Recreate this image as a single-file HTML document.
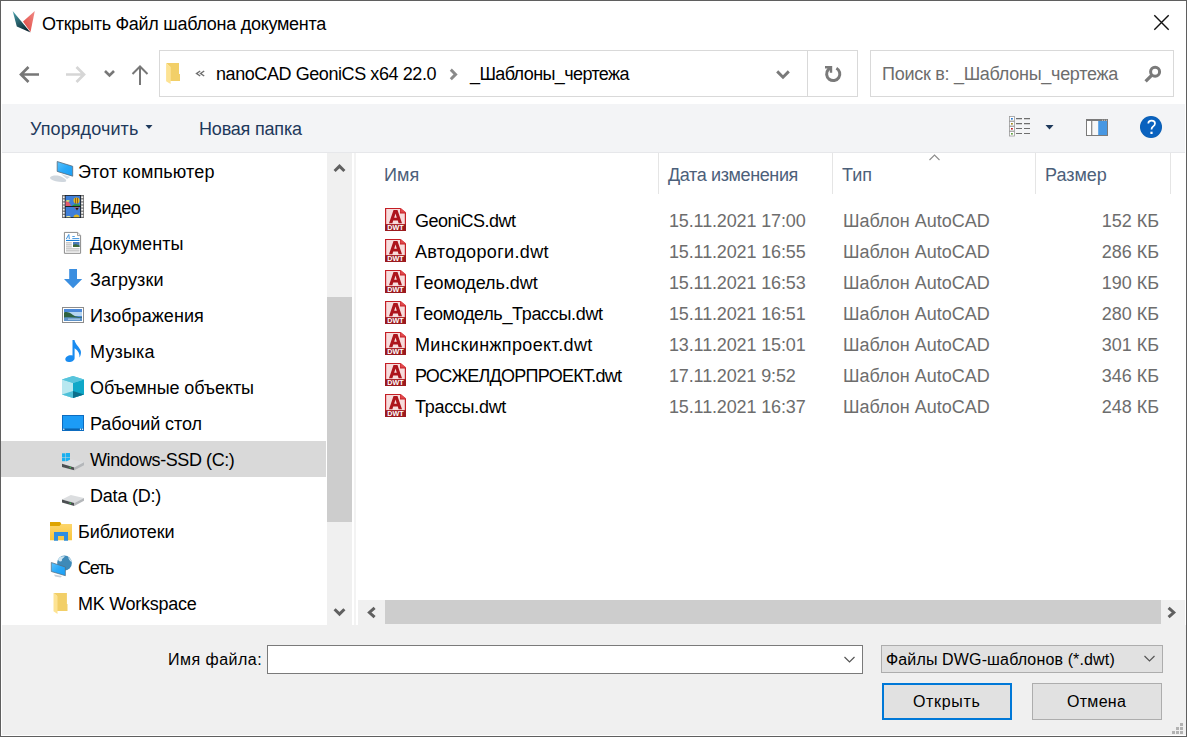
<!DOCTYPE html>
<html><head><meta charset="utf-8">
<style>
*{margin:0;padding:0;box-sizing:border-box}
html,body{width:1187px;height:737px;overflow:hidden;background:#fff}
body{position:relative;font-family:"Liberation Sans",sans-serif;font-size:18px;color:#000}
.a{position:absolute}
.t{position:absolute;white-space:nowrap;line-height:18px;font-size:18px}
.s{position:absolute;white-space:nowrap;line-height:16px;font-size:16px}
svg{position:absolute;overflow:visible}
</style></head><body>
<!-- window border -->
<div class="a" style="left:0;top:0;width:1187px;height:737px;border:1px solid #5f5f5f;border-bottom-color:#5f5f5f"></div>

<!-- title bar -->
<svg style="left:0;top:0" width="40" height="40">
  <defs>
    <linearGradient id="tg" x1="0" y1="0" x2="0.6" y2="1"><stop offset="0" stop-color="#4aa3ae"/><stop offset="1" stop-color="#0a2630"/></linearGradient>
    <linearGradient id="rg" x1="1" y1="0" x2="0" y2="1"><stop offset="0" stop-color="#f08a86"/><stop offset="1" stop-color="#e0443c"/></linearGradient>
  </defs>
  <polygon points="12.7,11 30.5,32.6 16.8,26.6" fill="url(#tg)"/>
  <polygon points="34.8,11 23,21.5 30.5,32" fill="url(#rg)"/>
</svg>
<div class="t" style="left:42px;top:15px;letter-spacing:-0.28px;">Открыть Файл шаблона документа</div>
<svg style="left:0;top:0" width="1187" height="40"><path d="M1154.3 15.3 L1168.7 29.7 M1168.7 15.3 L1154.3 29.7" stroke="#111" stroke-width="1.4"/></svg>

<!-- nav -->
<svg style="left:0;top:0" width="160" height="100">
  <path d="M21 74.5 H39 M28.5 67 L21 74.5 L28.5 82" fill="none" stroke="#777" stroke-width="2.7"/>
  <path d="M84 74.5 H66 M76.5 67 L84 74.5 L76.5 82" fill="none" stroke="#d6d6d6" stroke-width="2.7"/>
  <path d="M105 71 L109.5 75.5 L114 71" fill="none" stroke="#777" stroke-width="2.6"/>
  <path d="M140 85 V66.5 M132.5 74 L140 66.5 L147.5 74" fill="none" stroke="#777" stroke-width="2"/>
</svg>

<!-- address bar -->
<div class="a" style="left:159px;top:50px;width:699px;height:47px;border:1px solid #d9d9d9;background:#fff"></div>
<div class="a" style="left:807px;top:51px;width:1px;height:45px;background:#d9d9d9"></div>
<svg style="left:0;top:0" width="1187" height="100">
  <!-- folder -->
  <path d="M166.1 63.1 H179 V74 H180 V81 H170.2 V67 Z" fill="#f2cf68"/>
  <path d="M166.1 63.1 L170.6 67 V84 L166.1 81.3 Z" fill="#fde393"/>
  <path d="M200.2 71 L196.6 73.5 L200.2 76 M204.2 71 L200.6 73.5 L204.2 76" fill="none" stroke="#707070" stroke-width="1.5"/>
  <path d="M450.8 69.6 L455.6 74.4 L450.8 79.2" fill="none" stroke="#8a8a8a" stroke-width="2.9"/>
  <path d="M777.2 71.4 L783 77.2 L788.8 71.4" fill="none" stroke="#7a7a7a" stroke-width="2.9"/>
  <!-- refresh -->
  <path d="M836.4 68.2 A6.6 6.6 0 1 1 828.3 69.6 L830.5 67.4" fill="none" stroke="#7a7a7a" stroke-width="3"/>
  <path d="M825 66 H832.2 V72.7 H829.8 V68.4 H825 Z" fill="#7a7a7a"/>
  
  <!-- search -->

</svg>
<div class="t" style="left:216px;top:65px;letter-spacing:-0.42px;">nanoCAD GeoniCS x64 22.0</div>
<div class="t" style="left:470px;top:65px;letter-spacing:-0.6px;">_Шаблоны_чертежа</div>
<div class="a" style="left:870px;top:50px;width:304px;height:47px;border:1px solid #d9d9d9;background:#fff"></div>
<div class="t" style="left:882px;top:65px;color:#6d6d6d;letter-spacing:-0.28px;">Поиск в: _Шаблоны_чертежа</div>
<svg style="left:0;top:0" width="1187" height="100"><circle cx="1155.1" cy="71.8" r="4.5" fill="none" stroke="#7a7a7a" stroke-width="3"/><path d="M1151.6 75.4 L1145.6 81.4" stroke="#7a7a7a" stroke-width="3.2"/></svg>

<!-- toolbar -->
<div class="a" style="left:2px;top:104px;width:1183px;height:49px;background:#f3f4f6;border-bottom:1px solid #e6e7ea"></div>
<div class="t" style="left:30px;top:120px;color:#1e395b;letter-spacing:0.12px;">Упорядочить</div>
<svg style="left:0;top:0" width="1187" height="150">
  <path d="M145.5 125 H152.5 L149 129 Z" fill="#1e395b"/>
  <path d="M1045.5 125 H1053.5 L1049.5 129.5 Z" fill="#1e395b"/>
  <g fill="#fff" stroke="#9a9a9a" stroke-width="0.8">
    <rect x="1009.4" y="116.4" width="5" height="4.6"/><rect x="1009.4" y="121.4" width="5" height="4.6"/><rect x="1009.4" y="126.4" width="5" height="4.6"/><rect x="1009.4" y="131.4" width="5" height="4.6"/>
  </g>
  <rect x="1011" y="118" width="1.8" height="1.6" fill="#2a7ad0"/><rect x="1011" y="123" width="1.8" height="1.6" fill="#a08a20"/><rect x="1011" y="128" width="1.8" height="1.6" fill="#c02020"/><rect x="1011" y="133" width="1.8" height="1.6" fill="#60a040"/>
  <g stroke="#6e6e6e" stroke-width="1.1">
    <path d="M1016 118.6 H1022 M1024 118.6 H1030 M1016 123.6 H1022 M1024 123.6 H1030 M1016 128.5 H1022 M1024 128.5 H1030 M1016 133.5 H1022 M1024 133.5 H1030"/>
  </g>
  <rect x="1086" y="119" width="22" height="17" fill="#7a7a7a"/>
  <rect x="1087" y="121" width="20" height="14" fill="#fff"/>
  <rect x="1091" y="121" width="1.6" height="14" fill="#8f8f8f"/>
  <rect x="1092.6" y="121" width="5.6" height="14" fill="#f7f7f7"/>
  <rect x="1098.2" y="121" width="8.8" height="14" fill="#4797e2"/>
  <rect x="1102" y="119.8" width="1" height="0.8" fill="#ddd"/><rect x="1104" y="119.8" width="1" height="0.8" fill="#ddd"/><rect x="1106" y="119.8" width="1" height="0.8" fill="#ddd"/>
  <circle cx="1151" cy="127" r="11" fill="#0d5fb0"/>
  <circle cx="1151" cy="127" r="10.4" fill="#0a62bf"/>
  <path d="M1148.3 123.4 C1148.3 121.3 1149.7 120.6 1151.6 120.6 C1153.7 120.6 1155 121.8 1155 123.5 C1155 125.2 1153.9 125.9 1152.8 126.7 C1151.8 127.4 1151.5 128 1151.5 129.6" fill="none" stroke="#fff" stroke-width="1.7"/>
  <rect x="1150.4" y="131.7" width="2.2" height="2.3" fill="#fff"/>

</svg>
<div class="t" style="left:199px;top:120px;color:#1e395b;letter-spacing:-0.19px;">Новая папка</div>


<!-- sidebar -->
<div class="a" style="left:1px;top:153px;width:326px;height:472px;background:#fff"></div>
<div class="a" style="left:1px;top:441px;width:325px;height:36px;background:#d9d9d9"></div>
<div class="a" style="left:327px;top:153px;width:25px;height:472px;background:#f0f0f0"></div>
<div class="a" style="left:327px;top:297px;width:25px;height:225px;background:#cdcdcd"></div>
<div class="a" style="left:354px;top:153px;width:2px;height:472px;background:#f3f3f3"></div>
<svg style="left:0;top:0" width="400" height="640">
  <path d="M334.6 171 L339.5 166.1 L344.4 171" fill="none" stroke="#606060" stroke-width="3"/>
  <path d="M334.6 609.2 L339.5 614.1 L344.4 609.2" fill="none" stroke="#606060" stroke-width="3"/>
</svg>
<svg style="left:0;top:0" width="360" height="640">
<defs>
<linearGradient id="scr" x1="0" y1="0" x2="1" y2="1"><stop offset="0" stop-color="#5cc2fb"/><stop offset="0.5" stop-color="#2aa9f8"/><stop offset="1" stop-color="#1a9ef5"/></linearGradient>
<linearGradient id="fold" x1="0" y1="0" x2="0" y2="1"><stop offset="0" stop-color="#fdd873"/><stop offset="1" stop-color="#f9c53a"/></linearGradient>
<linearGradient id="sky" x1="0" y1="0" x2="0" y2="1"><stop offset="0" stop-color="#3d7fd6"/><stop offset="0.45" stop-color="#bfe0f4"/><stop offset="0.6" stop-color="#3c7a3a"/><stop offset="1" stop-color="#3e78b8"/></linearGradient>
<linearGradient id="drv" x1="0" y1="0" x2="0" y2="1"><stop offset="0" stop-color="#e4e6e8"/><stop offset="1" stop-color="#c4c7ca"/></linearGradient>
</defs>
<!-- PC -->
<path d="M57.2 161.5 L72.7 166.3 V176.2 L57.2 171.4 Z" fill="url(#scr)" stroke="#5a6a78" stroke-width="0.8"/>
<path d="M61 174 L70 177 L67 179 Z" fill="#d4dbe2"/>
<path d="M50 177.5 C52 175 58 175 62 177 C65 178.5 67 180 66 181.5 C62 183 54 181.5 50.5 179 Z" fill="#d0d7de"/>
<!-- Video -->
<rect x="62" y="195" width="22" height="23" fill="#707070"/>
<g fill="#f4f4f4">
<rect x="62.9" y="196.3" width="2" height="1.9"/><rect x="62.9" y="199.4" width="2" height="1.9"/><rect x="62.9" y="202.5" width="2" height="1.9"/><rect x="62.9" y="205.6" width="2" height="1.9"/><rect x="62.9" y="208.7" width="2" height="1.9"/><rect x="62.9" y="211.8" width="2" height="1.9"/><rect x="62.9" y="214.9" width="2" height="1.9"/>
<rect x="81.2" y="196.3" width="2" height="1.9"/><rect x="81.2" y="199.4" width="2" height="1.9"/><rect x="81.2" y="202.5" width="2" height="1.9"/><rect x="81.2" y="205.6" width="2" height="1.9"/><rect x="81.2" y="208.7" width="2" height="1.9"/><rect x="81.2" y="211.8" width="2" height="1.9"/><rect x="81.2" y="214.9" width="2" height="1.9"/>
</g>
<rect x="64.8" y="195" width="16.2" height="23" fill="#1e1e1e"/>
<rect x="65.6" y="195.8" width="14.6" height="10.2" fill="#3f7fd8"/>
<rect x="65.6" y="207" width="14.6" height="10.2" fill="#3f7fd8"/>
<path d="M65.6 206 V201 C67.5 200.5 69.5 202 71 206 Z" fill="#e35a6a"/>
<path d="M65.6 201 C67 199.5 69 199.5 70 201 L68 202 Z" fill="#d8e06a"/>
<circle cx="76.5" cy="200.6" r="3" fill="#e0b820"/>
<path d="M75.5 198 V203.5 M77.5 198 V203.5" stroke="#7a3a10" stroke-width="0.7"/>
<path d="M72 206 C73 204 78 204 80.2 205 V206 Z" fill="#2a9a3a"/>
<path d="M74 207.5 H79.5 L77 210 Z" fill="#d8503a"/>
<path d="M75.5 208 L77 210.5 L78.5 208" fill="#1a1a1a"/>
<path d="M73.5 217.2 C73.5 213.5 79.5 213.5 79.5 217.2 Z" fill="#e0b820"/>
<path d="M65.6 217.2 C67 215.5 70 215.5 71 217.2 Z" fill="#e8e8a0"/>
<!-- Docs -->
<path d="M64.4 232.4 H77.7 L80.6 235.5 V253.3 H64.4 Z" fill="#fff" stroke="#8a8a8a" stroke-width="1"/>
<path d="M77.5 232.6 V235.6 H80.5" fill="#eee" stroke="#8a8a8a" stroke-width="0.8"/>
<path d="M66.3 239 L68.8 234.5 L69.3 239" fill="none" stroke="#3a92e0" stroke-width="1"/>
<rect x="72.3" y="236" width="2.5" height="0.9" fill="#3a92e0"/>
<rect x="72.3" y="238" width="7" height="0.9" fill="#3a92e0"/>
<rect x="66" y="239.9" width="13.5" height="1.1" fill="#1a7fd8"/>
<rect x="66" y="242.5" width="5.8" height="0.8" fill="#9a9a9a"/><rect x="66" y="244.5" width="5.8" height="0.8" fill="#9a9a9a"/><rect x="66" y="246.5" width="5.8" height="0.8" fill="#9a9a9a"/>
<rect x="66" y="248.5" width="13.5" height="0.8" fill="#9a9a9a"/><rect x="66" y="250.5" width="13.5" height="0.8" fill="#9a9a9a"/>
<rect x="73" y="242" width="6.5" height="5" fill="#4a7ab8"/>
<path d="M73 245 C75 243.5 77 244.5 79.5 245.5 V247 H73 Z" fill="#3e6a3a"/>
<!-- Downloads -->
<path d="M69.2 269 H77 V279 H82.2 L73.1 288.2 L64 279 H69.2 Z" fill="#3a8ee0"/>
<!-- Pictures -->
<rect x="62.5" y="307.5" width="21" height="15" fill="#fff" stroke="#8c8c8c" stroke-width="1"/>
<rect x="64" y="309" width="18" height="12" fill="#4a88d8"/>
<rect x="64" y="312" width="18" height="4" fill="#b5d5f0"/>
<path d="M64 312.5 C67 311.5 70 312.5 73 315 C76 317 79 317 82 317.5 V321 H64 Z" fill="#2e6240"/>
<path d="M64 317.5 C70 317 76 318 82 318 V321 H64 Z" fill="#5d92c8"/>
<path d="M68 319.2 H80" stroke="#cfe3f3" stroke-width="0.8"/>
<!-- Music -->
<path d="M72.5 340 H74.5 C75 344 79.5 347 80.8 351 C81.3 353 80.7 355.5 79.5 357.5 C79.8 354 78.5 351 74.6 348.3 V358 C74.6 360.5 72 362 69 362 C66.5 362 65.3 360.8 65.3 359.3 C65.3 357 68 355.3 70.6 355.3 C71.3 355.3 72 355.4 72.5 355.6 Z" fill="#1a8cf0"/>
<!-- 3D -->
<path d="M73 376 L84 379.5 V394.5 L73 398 L62 394.5 V379.5 Z" fill="#5ccbe0"/>
<path d="M62 379.5 L73 383 V398 L62 394.5 Z" fill="#b8e8f0"/>
<path d="M73 383 L84 379.5 V394.5 L73 398 Z" fill="#0fa8c8"/>
<path d="M62 379.5 L73 376 L84 379.5 L73 383 Z" fill="#58c4dc"/>
<path d="M73 391 L84 394.5 L73 398 Z" fill="#0a6f8c"/>
<path d="M62 394.5 L73 391 V398 Z" fill="#4ec0d8"/>
<!-- Desktop -->
<rect x="62.5" y="415.5" width="21" height="15" fill="#1c9cf6" stroke="#0d6cc0" stroke-width="1"/>
<rect x="63" y="428.5" width="20" height="1.4" fill="#0b5fa8"/>
<circle cx="63.8" cy="429.2" r="0.7" fill="#fff"/><circle cx="80.5" cy="429.2" r="0.7" fill="#fff"/><circle cx="82.5" cy="429.2" r="0.7" fill="#fff"/>
<!-- Drive C -->
<g fill="#1ab0f0"><rect x="62" y="453.3" width="3.5" height="3.7"/><rect x="66" y="453" width="4" height="4"/><rect x="62" y="457.5" width="3.5" height="3.7"/><rect x="66" y="457.5" width="4" height="4"/></g>
<path d="M62 463.8 L70.8 459.3 L84 462.3 L74.3 467.4 Z" fill="#dcdee0"/>
<path d="M62 463.8 L74.3 467.4 V470.3 L62 467 Z" fill="#4c4f52"/>
<path d="M74.3 467.4 L84 462.3 V465.2 L74.3 470.3 Z" fill="#b4b7ba"/>
<circle cx="70.2" cy="467.6" r="0.75" fill="#3ad050"/>
<!-- Drive D -->
<g transform="translate(0,35.6)">
<path d="M62 463.8 L70.8 459.3 L84 462.3 L74.3 467.4 Z" fill="#dcdee0"/>
<path d="M62 463.8 L74.3 467.4 V470.3 L62 467 Z" fill="#4c4f52"/>
<path d="M74.3 467.4 L84 462.3 V465.2 L74.3 470.3 Z" fill="#b4b7ba"/>
<circle cx="70.2" cy="467.6" r="0.75" fill="#3ad050"/>
</g>
<!-- Libraries -->
<path d="M50 522 H60 L61.5 524 H72 V540.3 H50 Z" fill="url(#fold)"/>
<path d="M50 522 H60 L61.2 524 L59.5 526 H50 Z" fill="#dea400"/>
<path d="M54 532 H68 V540.8 H64 V536 H58 V540.8 H54 Z" fill="#2f8ee0"/>
<!-- Network -->
<circle cx="64.5" cy="563" r="7.4" fill="#3e8ab8"/>
<path d="M58 559 C60 556 63 555.8 65 556.5 C63 558 61 559.5 62 561 C60 562 58.5 561.5 58 559 Z" fill="#cfe6f2"/>
<path d="M68 557 C70 558 71.5 560 71.8 562 C70 561.5 69 559.5 68 557 Z" fill="#cfe6f2"/>
<path d="M51.3 562.5 L65.4 567 V575.7 L51.3 571.5 Z" fill="url(#scr)" stroke="#5a6a78" stroke-width="0.7"/>
<path d="M54 574.5 L62 576 L60.5 577.5 L55 576.5 Z" fill="#c8d0d8"/>
<!-- MK folder -->
<path d="M53.5 593 H66.9 V604 H67.5 V611 H57 V596 Z" fill="#f2cf68"/>
<path d="M53.5 593 L57.5 596.2 V614 L53.5 611.2 Z" fill="#fde393"/>
</svg>
<div class="t" style="left:78px;top:163px;letter-spacing:0.14px;">Этот компьютер</div>
<div class="t" style="left:90px;top:199px;letter-spacing:-0.45px;">Видео</div>
<div class="t" style="left:90px;top:235px;letter-spacing:0.09px;">Документы</div>
<div class="t" style="left:90px;top:271px;letter-spacing:0.17px;">Загрузки</div>
<div class="t" style="left:90px;top:307px;letter-spacing:0.07px;">Изображения</div>
<div class="t" style="left:90px;top:343px;letter-spacing:0.18px;">Музыка</div>
<div class="t" style="left:90px;top:379px;letter-spacing:-0.1px;">Объемные объекты</div>
<div class="t" style="left:90px;top:415px;letter-spacing:-0.09px;">Рабочий стол</div>
<div class="t" style="left:90px;top:451px;letter-spacing:-0.41px;">Windows-SSD (C:)</div>
<div class="t" style="left:90px;top:487px;letter-spacing:-0.21px;">Data (D:)</div>
<div class="t" style="left:78px;top:523px;letter-spacing:-0.11px;">Библиотеки</div>
<div class="t" style="left:78px;top:559px;letter-spacing:-1.2px;">Сеть</div>
<div class="t" style="left:78px;top:595px;letter-spacing:-0.27px;">MK Workspace</div>

<!-- file list -->
<div class="a" style="left:658px;top:153px;width:1px;height:41px;background:#e5e5e5"></div>
<div class="a" style="left:832px;top:153px;width:1px;height:41px;background:#e5e5e5"></div>
<div class="a" style="left:1035px;top:153px;width:1px;height:41px;background:#e5e5e5"></div>
<div class="a" style="left:1170px;top:153px;width:1px;height:41px;background:#e5e5e5"></div>
<svg style="left:0;top:0" width="1187" height="200"><path d="M929.5 160 L934.5 155 L939.5 160" fill="none" stroke="#8c8c8c" stroke-width="1.1"/></svg>
<div class="t" style="left:384px;top:166px;color:#4c607a;letter-spacing:0.15px;">Имя</div>
<div class="t" style="left:668px;top:166px;color:#4c607a;letter-spacing:-0.38px;">Дата изменения</div>
<div class="t" style="left:842px;top:166px;color:#4c607a">Тип</div>
<div class="t" style="left:1045px;top:166px;color:#4c607a">Размер</div>
<svg style="left:385px;top:208px" width="21" height="23"><path d="M0 0 H15.5 L21 4.5 V23 H0 Z" fill="#c41e24"/>
<path d="M1.2 1.1 H15 V5.4 H19.8 V16.3 H1.2 Z" fill="#f7dcdc"/>
<path d="M15.5 0 V4.5 H21 Z" fill="#e0484c"/>
<path d="M4 15.3 L8.5 2.1 H12.5 L17 15.3 H13.6 L12.8 12.5 H8.2 L7.4 15.3 Z M9.2 9.8 H11.8 L10.5 5.4 Z" fill="#ad151c" fill-rule="evenodd"/>
<rect x="0" y="16.3" width="21" height="6.7" fill="#9b1a1e"/>
<text x="10.5" y="22.3" font-family="Liberation Sans" font-weight="bold" font-size="7.2" fill="#fff" text-anchor="middle">DWT</text></svg>
<div class="t" style="left:415px;top:212px;letter-spacing:-0.5px;">GeoniCS.dwt</div>
<div class="t" style="left:669px;top:212px;color:#6d6d6d;letter-spacing:-0.14px">15.11.2021 17:00</div>
<div class="t" style="left:843px;top:212px;color:#6d6d6d">Шаблон AutoCAD</div>
<div class="t" style="right:28px;top:212px;color:#6d6d6d">152 КБ</div>
<svg style="left:385px;top:239px" width="21" height="23"><path d="M0 0 H15.5 L21 4.5 V23 H0 Z" fill="#c41e24"/>
<path d="M1.2 1.1 H15 V5.4 H19.8 V16.3 H1.2 Z" fill="#f7dcdc"/>
<path d="M15.5 0 V4.5 H21 Z" fill="#e0484c"/>
<path d="M4 15.3 L8.5 2.1 H12.5 L17 15.3 H13.6 L12.8 12.5 H8.2 L7.4 15.3 Z M9.2 9.8 H11.8 L10.5 5.4 Z" fill="#ad151c" fill-rule="evenodd"/>
<rect x="0" y="16.3" width="21" height="6.7" fill="#9b1a1e"/>
<text x="10.5" y="22.3" font-family="Liberation Sans" font-weight="bold" font-size="7.2" fill="#fff" text-anchor="middle">DWT</text></svg>
<div class="t" style="left:415px;top:243px;letter-spacing:0.35px;">Автодороги.dwt</div>
<div class="t" style="left:669px;top:243px;color:#6d6d6d;letter-spacing:-0.14px">15.11.2021 16:55</div>
<div class="t" style="left:843px;top:243px;color:#6d6d6d">Шаблон AutoCAD</div>
<div class="t" style="right:28px;top:243px;color:#6d6d6d">286 КБ</div>
<svg style="left:385px;top:270px" width="21" height="23"><path d="M0 0 H15.5 L21 4.5 V23 H0 Z" fill="#c41e24"/>
<path d="M1.2 1.1 H15 V5.4 H19.8 V16.3 H1.2 Z" fill="#f7dcdc"/>
<path d="M15.5 0 V4.5 H21 Z" fill="#e0484c"/>
<path d="M4 15.3 L8.5 2.1 H12.5 L17 15.3 H13.6 L12.8 12.5 H8.2 L7.4 15.3 Z M9.2 9.8 H11.8 L10.5 5.4 Z" fill="#ad151c" fill-rule="evenodd"/>
<rect x="0" y="16.3" width="21" height="6.7" fill="#9b1a1e"/>
<text x="10.5" y="22.3" font-family="Liberation Sans" font-weight="bold" font-size="7.2" fill="#fff" text-anchor="middle">DWT</text></svg>
<div class="t" style="left:415px;top:274px;letter-spacing:-0.05px;">Геомодель.dwt</div>
<div class="t" style="left:669px;top:274px;color:#6d6d6d;letter-spacing:-0.14px">15.11.2021 16:53</div>
<div class="t" style="left:843px;top:274px;color:#6d6d6d">Шаблон AutoCAD</div>
<div class="t" style="right:28px;top:274px;color:#6d6d6d">190 КБ</div>
<svg style="left:385px;top:301px" width="21" height="23"><path d="M0 0 H15.5 L21 4.5 V23 H0 Z" fill="#c41e24"/>
<path d="M1.2 1.1 H15 V5.4 H19.8 V16.3 H1.2 Z" fill="#f7dcdc"/>
<path d="M15.5 0 V4.5 H21 Z" fill="#e0484c"/>
<path d="M4 15.3 L8.5 2.1 H12.5 L17 15.3 H13.6 L12.8 12.5 H8.2 L7.4 15.3 Z M9.2 9.8 H11.8 L10.5 5.4 Z" fill="#ad151c" fill-rule="evenodd"/>
<rect x="0" y="16.3" width="21" height="6.7" fill="#9b1a1e"/>
<text x="10.5" y="22.3" font-family="Liberation Sans" font-weight="bold" font-size="7.2" fill="#fff" text-anchor="middle">DWT</text></svg>
<div class="t" style="left:415px;top:305px;letter-spacing:-0.33px;">Геомодель_Трассы.dwt</div>
<div class="t" style="left:669px;top:305px;color:#6d6d6d;letter-spacing:-0.14px">15.11.2021 16:51</div>
<div class="t" style="left:843px;top:305px;color:#6d6d6d">Шаблон AutoCAD</div>
<div class="t" style="right:28px;top:305px;color:#6d6d6d">280 КБ</div>
<svg style="left:385px;top:332px" width="21" height="23"><path d="M0 0 H15.5 L21 4.5 V23 H0 Z" fill="#c41e24"/>
<path d="M1.2 1.1 H15 V5.4 H19.8 V16.3 H1.2 Z" fill="#f7dcdc"/>
<path d="M15.5 0 V4.5 H21 Z" fill="#e0484c"/>
<path d="M4 15.3 L8.5 2.1 H12.5 L17 15.3 H13.6 L12.8 12.5 H8.2 L7.4 15.3 Z M9.2 9.8 H11.8 L10.5 5.4 Z" fill="#ad151c" fill-rule="evenodd"/>
<rect x="0" y="16.3" width="21" height="6.7" fill="#9b1a1e"/>
<text x="10.5" y="22.3" font-family="Liberation Sans" font-weight="bold" font-size="7.2" fill="#fff" text-anchor="middle">DWT</text></svg>
<div class="t" style="left:415px;top:336px;letter-spacing:0.37px;">Минскинжпроект.dwt</div>
<div class="t" style="left:669px;top:336px;color:#6d6d6d;letter-spacing:-0.14px">13.11.2021 15:01</div>
<div class="t" style="left:843px;top:336px;color:#6d6d6d">Шаблон AutoCAD</div>
<div class="t" style="right:28px;top:336px;color:#6d6d6d">301 КБ</div>
<svg style="left:385px;top:363px" width="21" height="23"><path d="M0 0 H15.5 L21 4.5 V23 H0 Z" fill="#c41e24"/>
<path d="M1.2 1.1 H15 V5.4 H19.8 V16.3 H1.2 Z" fill="#f7dcdc"/>
<path d="M15.5 0 V4.5 H21 Z" fill="#e0484c"/>
<path d="M4 15.3 L8.5 2.1 H12.5 L17 15.3 H13.6 L12.8 12.5 H8.2 L7.4 15.3 Z M9.2 9.8 H11.8 L10.5 5.4 Z" fill="#ad151c" fill-rule="evenodd"/>
<rect x="0" y="16.3" width="21" height="6.7" fill="#9b1a1e"/>
<text x="10.5" y="22.3" font-family="Liberation Sans" font-weight="bold" font-size="7.2" fill="#fff" text-anchor="middle">DWT</text></svg>
<div class="t" style="left:415px;top:367px;letter-spacing:-0.74px;">РОСЖЕЛДОРПРОЕКТ.dwt</div>
<div class="t" style="left:669px;top:367px;color:#6d6d6d;letter-spacing:-0.14px">17.11.2021 9:52</div>
<div class="t" style="left:843px;top:367px;color:#6d6d6d">Шаблон AutoCAD</div>
<div class="t" style="right:28px;top:367px;color:#6d6d6d">346 КБ</div>
<svg style="left:385px;top:394px" width="21" height="23"><path d="M0 0 H15.5 L21 4.5 V23 H0 Z" fill="#c41e24"/>
<path d="M1.2 1.1 H15 V5.4 H19.8 V16.3 H1.2 Z" fill="#f7dcdc"/>
<path d="M15.5 0 V4.5 H21 Z" fill="#e0484c"/>
<path d="M4 15.3 L8.5 2.1 H12.5 L17 15.3 H13.6 L12.8 12.5 H8.2 L7.4 15.3 Z M9.2 9.8 H11.8 L10.5 5.4 Z" fill="#ad151c" fill-rule="evenodd"/>
<rect x="0" y="16.3" width="21" height="6.7" fill="#9b1a1e"/>
<text x="10.5" y="22.3" font-family="Liberation Sans" font-weight="bold" font-size="7.2" fill="#fff" text-anchor="middle">DWT</text></svg>
<div class="t" style="left:415px;top:398px;letter-spacing:-0.29px;">Трассы.dwt</div>
<div class="t" style="left:669px;top:398px;color:#6d6d6d;letter-spacing:-0.14px">15.11.2021 16:37</div>
<div class="t" style="left:843px;top:398px;color:#6d6d6d">Шаблон AutoCAD</div>
<div class="t" style="right:28px;top:398px;color:#6d6d6d">248 КБ</div>
<div class="a" style="left:358px;top:600px;width:827px;height:25px;background:#f0f0f0"></div>
<div class="a" style="left:385px;top:600px;width:776px;height:24px;background:#cdcdcd"></div>
<svg style="left:0;top:0" width="1187" height="640"><path d="M374.6 607.8 L369.4 612.5 L374.6 617.2" fill="none" stroke="#606060" stroke-width="3"/><path d="M1168.6 607.8 L1173.8 612.5 L1168.6 617.2" fill="none" stroke="#606060" stroke-width="3"/></svg>

<!-- bottom -->
<div class="a" style="left:2px;top:625px;width:1184px;height:110px;background:#f0f0f0"></div>
<svg style="left:0;top:0" width="1187" height="737"><g fill="#b2b2b2"><rect x="1180" y="723" width="3" height="3"/><rect x="1176" y="727" width="3" height="3"/><rect x="1180" y="727" width="3" height="3"/><rect x="1172" y="731" width="3" height="3"/><rect x="1176" y="731" width="3" height="3"/><rect x="1180" y="731" width="3" height="3"/></g></svg>
<div class="s" style="left:168px;top:652px;letter-spacing:0.49px;">Имя файла:</div>
<div class="a" style="left:267px;top:645px;width:596px;height:29px;border:1px solid #7a7a7a;background:#fff"></div>
<div class="a" style="left:881px;top:645px;width:282px;height:28px;border:1px solid #adadad;background:#e1e1e1"></div>
<div class="s" style="left:886px;top:652px;letter-spacing:0.14px;">Файлы DWG-шаблонов (*.dwt)</div>
<div class="a" style="left:882px;top:683px;width:130px;height:37px;border:2px solid #0078d7;background:#e1e1e1"></div>
<div class="s" style="left:913px;top:694px;letter-spacing:0.67px;">Открыть</div>
<div class="a" style="left:1032px;top:683px;width:130px;height:37px;border:1px solid #adadad;background:#e1e1e1"></div>
<div class="s" style="left:1067px;top:694px;letter-spacing:0.3px;">Отмена</div>
<svg style="left:0;top:0" width="1187" height="737">
  <path d="M844.5 657 L849.5 662 L854.5 657" fill="none" stroke="#555" stroke-width="1.2"/>
  <path d="M1144.5 656 L1149.5 661 L1154.5 656" fill="none" stroke="#555" stroke-width="1.2"/>
</svg>
</body></html>
